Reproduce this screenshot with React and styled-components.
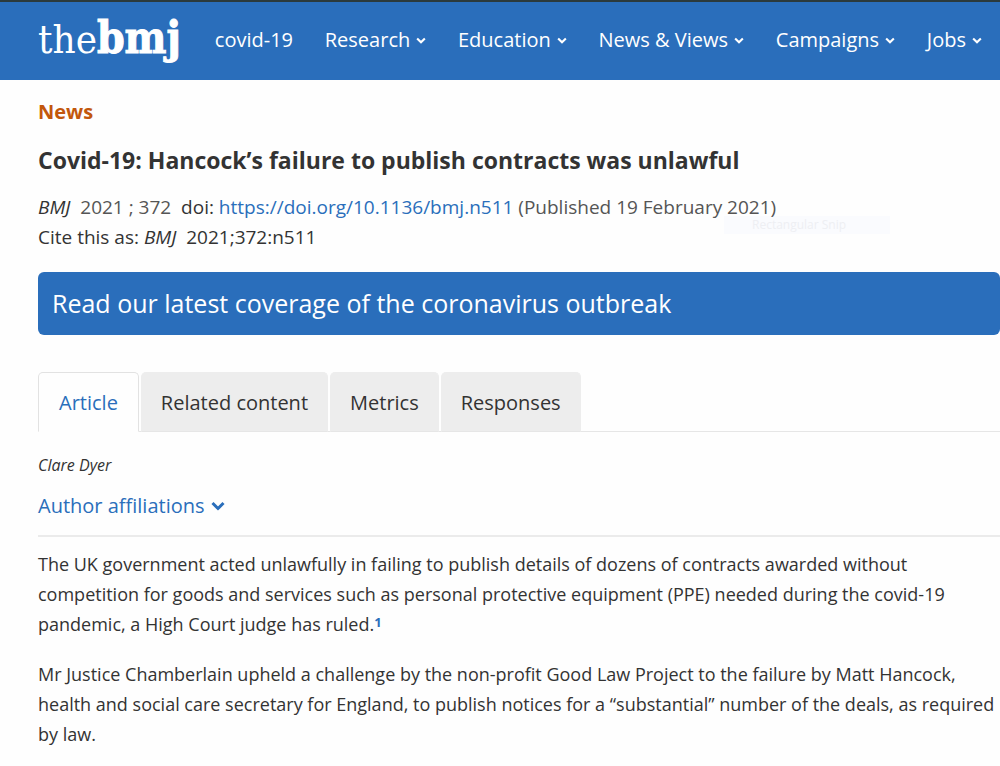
import React from "react";
import styled, { createGlobalStyle } from "styled-components";

const blue = "#2a6ebb";
const sans = '"Open Sans", "Noto Sans", sans-serif';

const GlobalStyle = createGlobalStyle`
  *, *::before, *::after { box-sizing: border-box; }
  body {
    margin: 0;
    background: #fefefe;
    color: #333;
    font-family: ${sans};
    font-size: 18px;
    line-height: 30px;
  }
  a { color: ${blue}; text-decoration: none; }
  h1, p { margin: 0; }
`;

const Page = styled.div`
  overflow-x: hidden;
`;

const Header = styled.header`
  display: flex;
  align-items: center;
  gap: 34px;
  height: 80px;
  padding: 0 18px 2px 38px;
  background: ${blue};
  border-top: 2px solid #2b3a3c;
`;

const Logo = styled.a`
  && { color: #fff; }
  font-family: "DejaVu Serif Condensed", "DejaVu Serif", serif;
  font-size: 40px;
  line-height: 44px;
  padding-bottom: 4px;
  white-space: nowrap;
`;

const LogoBold = styled.b`
  font-size: 44px;
  -webkit-text-stroke: 1px #fff;
`;

const Nav = styled.nav`
  display: flex;
  flex: 1;
  justify-content: space-between;
`;

const NavItem = styled.a`
  && { color: #fff; }
  display: flex;
  align-items: center;
  gap: 6px;
  font-size: 20px;
  white-space: nowrap;
`;

const Main = styled.main`
  padding: 16px 0 12px 38px;
`;

const Kicker = styled.p`
  color: #c2570c;
  font-size: 20px;
  font-weight: 700;
  line-height: 32px;
`;

const Title = styled.h1`
  padding: 16px 0;
  font-size: 23px;
  line-height: 32px;
`;

const Citation = styled.div`
  font-size: 19px;
  white-space: pre-wrap;
`;

const CitationBlock = styled.div`
  position: relative;
`;

const SnipGhost = styled.div`
  position: absolute;
  left: 686px;
  top: 24px;
  width: 166px;
  padding-left: 28px;
  background: #fafbfe;
  color: #eeeff3;
  font-size: 12px;
  line-height: 18px;
`;

const Muted = styled.span`
  position: relative;
  z-index: 1;
  color: #555;
`;

const Banner = styled.a`
  && { color: #fff; }
  display: block;
  margin: 20px 0 37px;
  padding: 16px 14px;
  border-radius: 6px;
  background: ${blue};
  font-size: 25px;
  line-height: 31px;
`;

const Tabs = styled.div`
  display: flex;
  gap: 2px;
  border-bottom: 1px solid #e6e6e6;
`;

const Tab = styled.button`
  height: 60px;
  margin-bottom: -1px;
  padding: 0 ${(p) => (p.$active ? 20 : 19)}px;
  border: 1px solid ${(p) => (p.$active ? "#e2e2e2" : "#ededed")};
  border-bottom-color: ${(p) => (p.$active ? "#fefefe" : "#e6e6e6")};
  border-radius: 5px 5px 0 0;
  background: ${(p) => (p.$active ? "#fefefe" : "#ededed")};
  color: ${(p) => (p.$active ? blue : "#333")};
  font-family: inherit;
  font-size: 20px;
`;

const Author = styled.p`
  padding-top: 18px;
  font-size: 16px;
  font-style: italic;
`;

const Affiliations = styled.button`
  display: flex;
  align-items: center;
  gap: 6px;
  margin: 11px 0 14px;
  padding: 0;
  border: 0;
  background: none;
  color: ${blue};
  font-family: inherit;
  font-size: 20px;
  line-height: 30px;
`;

const Body = styled.article`
  display: grid;
  gap: 20px;
  padding-top: 12px;
  border-top: 2px solid #ebebeb;
`;

const Reference = styled.sup`
  font-size: 13px;
  font-weight: 700;
  line-height: 0;
  vertical-align: 4px;
`;

const Chevron = ({ width, height, stroke }) => (
  <svg width={width} height={height} viewBox="0 0 14 10" aria-hidden="true">
    <path d="M1.5 2 L7 7.5 L12.5 2" fill="none" stroke="currentColor" strokeWidth={stroke} />
  </svg>
);

const navItems = ["covid-19", "Research", "Education", "News & Views", "Campaigns", "Jobs"];
const tabs = ["Article", "Related content", "Metrics", "Responses"];

export default function App() {
  return (
    <Page>
      <GlobalStyle />
      <Header>
        <Logo href="#">the<LogoBold>bmj</LogoBold></Logo>
        <Nav>
          {navItems.map((name, i) => (
            <NavItem href="#" key={name}>
              {name}
              {i > 0 && <Chevron width={10} height={7} stroke={3} />}
            </NavItem>
          ))}
        </Nav>
      </Header>
      <Main>
        <Kicker>News</Kicker>
        <Title>Covid-19: Hancock’s failure to publish contracts was unlawful</Title>
        <CitationBlock>
          <Citation>
            <i>BMJ</i>{"  "}<Muted>2021 ; 372</Muted>{"  "}doi: <a href="#">https://doi.org/10.1136/bmj.n511</a> <Muted>(Published 19 February 2021)</Muted>
          </Citation>
          <Citation>Cite this as: <i>BMJ</i>{"  "}2021;372:n511</Citation>
          <SnipGhost>Rectangular Snip</SnipGhost>
        </CitationBlock>
        <Banner href="#">Read our latest coverage of the coronavirus outbreak</Banner>
        <Tabs role="tablist">
          {tabs.map((name, i) => (
            <Tab key={name} type="button" role="tab" aria-selected={i === 0} $active={i === 0}>{name}</Tab>
          ))}
        </Tabs>
        <Author>Clare Dyer</Author>
        <Affiliations type="button">
          Author affiliations
          <Chevron width={14} height={10} stroke={3} />
        </Affiliations>
        <Body>
          <p>
            The UK government acted unlawfully in failing to publish details of dozens of contracts awarded without competition for goods and services such as personal protective equipment (PPE) needed during the covid-19 pandemic, a High Court judge has ruled.
            <Reference><a href="#">1</a></Reference>
          </p>
          <p>
            Mr Justice Chamberlain upheld a challenge by the non-profit Good Law Project to the failure by Matt Hancock, health and social care secretary for England, to publish notices for a “substantial” number of the deals, as required by law.
          </p>
        </Body>
      </Main>
    </Page>
  );
}
